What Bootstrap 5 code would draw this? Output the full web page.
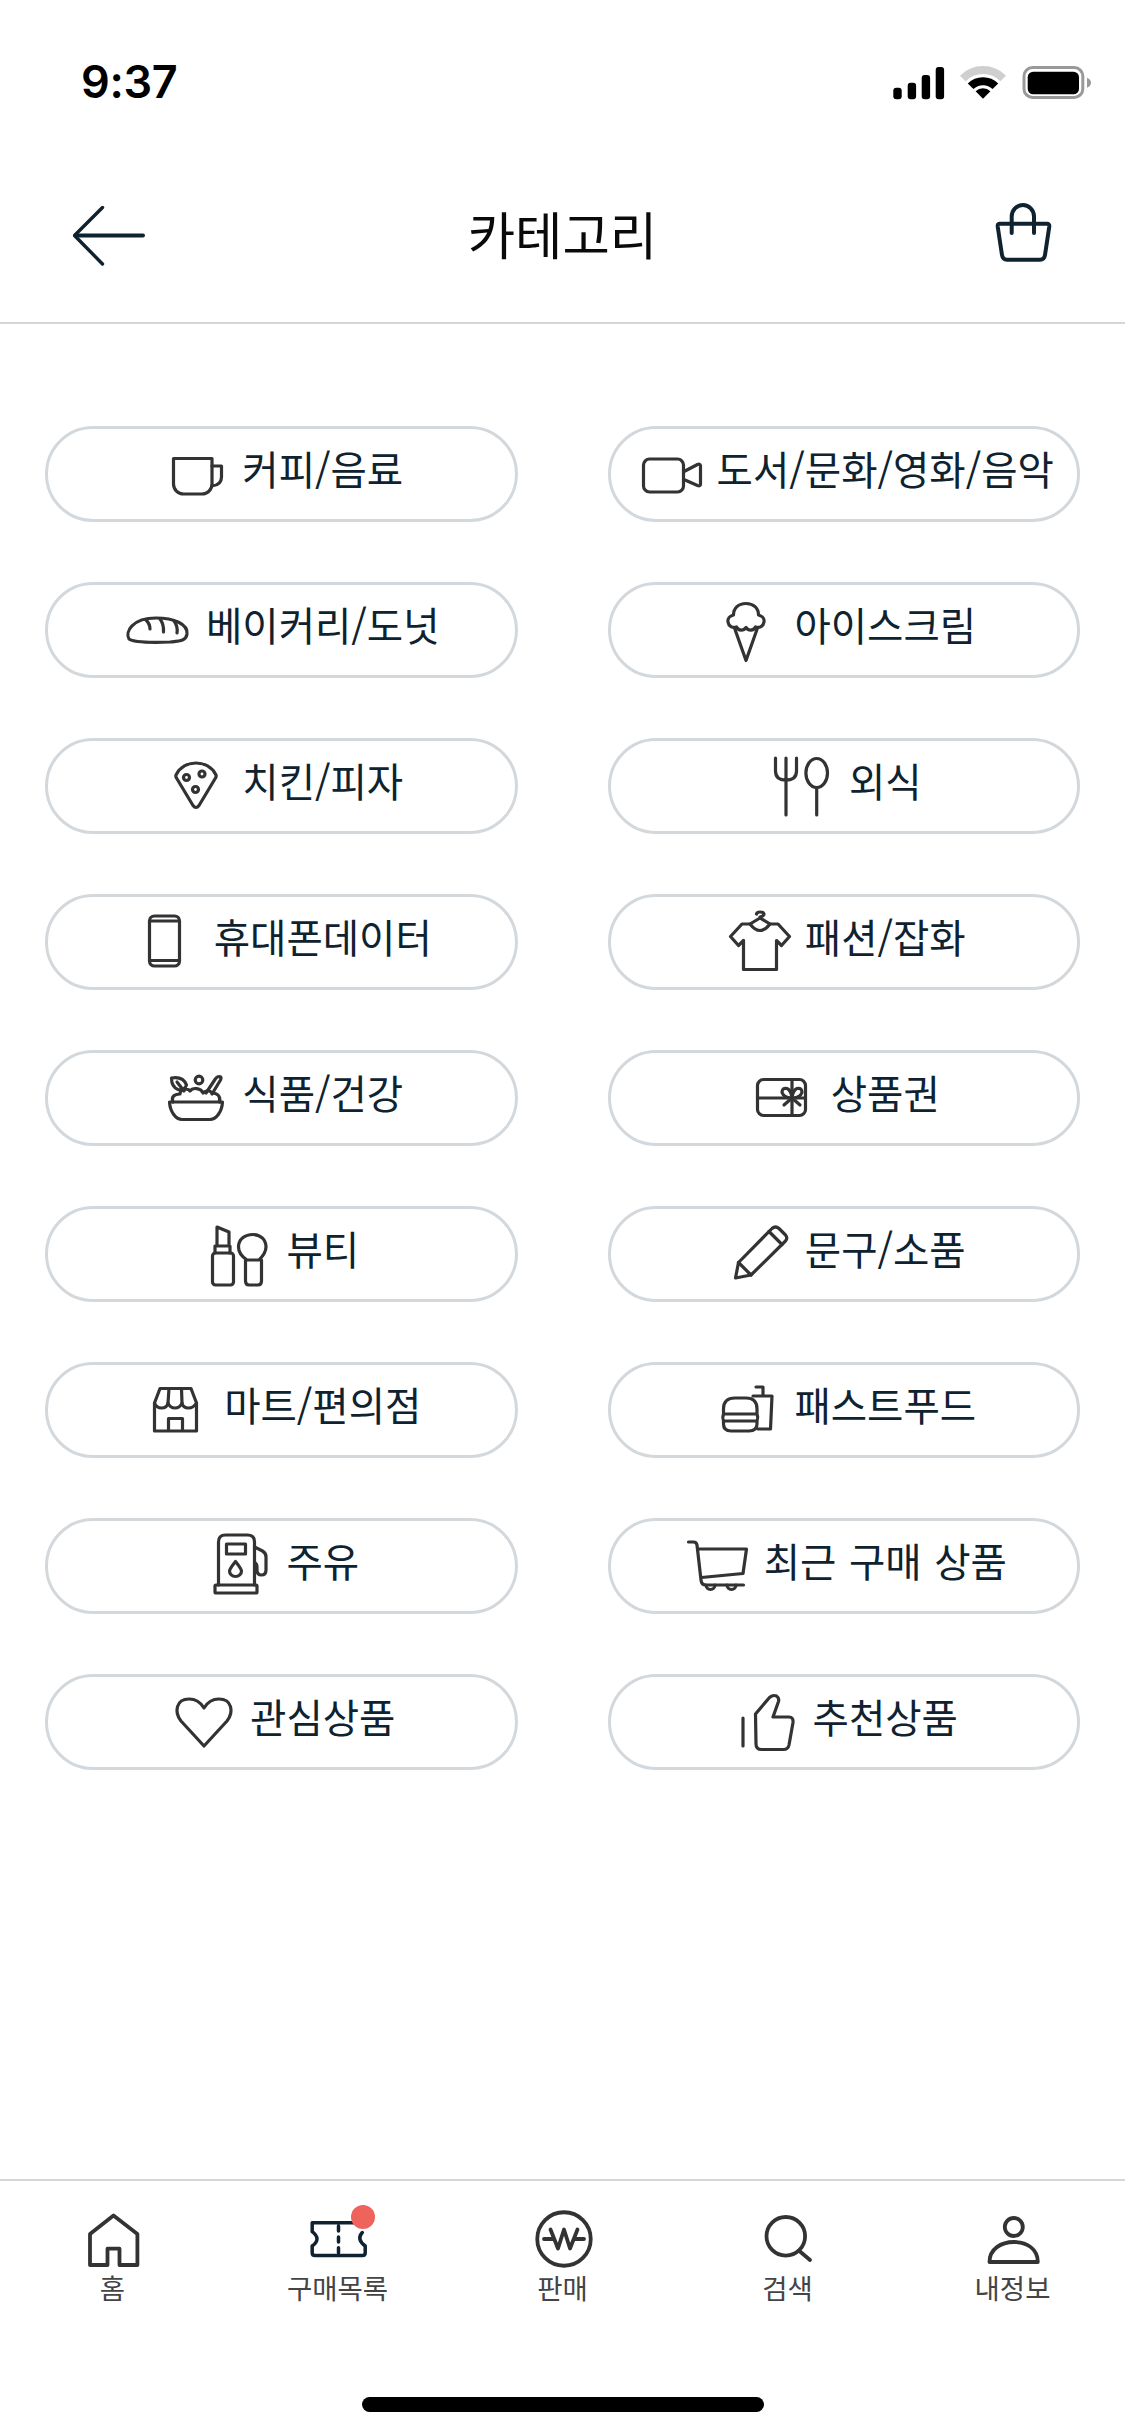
<!DOCTYPE html>
<html lang="ko">
<head>
<meta charset="utf-8">
<title>카테고리</title>
<meta name="viewport" content="width=device-width, initial-scale=1">
<link rel="stylesheet" href="https://cdn.jsdelivr.net/npm/bootstrap@5.3.0/dist/css/bootstrap.min.css">
<style>
body{font-family:"Noto Sans CJK KR","Noto Sans",sans-serif;color:#0f2230;background:#fff}
.screen{height:2436px;overflow:hidden}
.status-strip{height:148px;padding:65px 33px 0 81px}
.clock{font-family:Inter,"Liberation Sans",sans-serif;font-weight:600;font-size:45px;line-height:34px;color:#000;letter-spacing:-.3px}
.top-bar{height:176px;padding:0 73px;border-bottom:2px solid #d6d6d6}
.top-side{width:90px}
.top-side-l{padding-top:2px}
.top-side-r{padding-bottom:4px}
.top-title{font-size:51.5px;font-weight:400;color:#0a0a0a;line-height:1;margin:0 0 5px}
.cat-area{padding:102px 45px 0}
.cat-grid{--bs-gutter-x:90px;--bs-gutter-y:60px}
.cat-pill{height:96px;border:3px solid #d3d8dc;background:#fff;color:#0f2230;font-size:39.5px;line-height:1;padding:0;word-spacing:1.5px}
.cat-pill:hover{border-color:#d3d8dc;background:#fff;color:#0f2230}
.cat-ico{width:83px;height:90px;flex:none;overflow:visible;margin:0 -3px 0 3px}
.cat-label{position:relative;top:-6px;white-space:nowrap}
.ln{fill:none;stroke:#333;stroke-width:3.2;stroke-linecap:round;stroke-linejoin:round}
.tab-bar{border-top:2px solid #d6d6d6;padding-top:25px}
.tab-item{width:225px;color:#444;font-size:27.5px;line-height:1;text-decoration:none}
.tab-ico{width:70px;height:65px;display:block}
.tab-wrap{position:relative}
.tab-dot{position:absolute;left:48.5px;top:-.5px;width:24px;height:24px;border-radius:50%;background:#ee635c}
.tab-text{margin-top:3px}
.home-pill{width:402px;height:15px;border-radius:8px;background:#000;margin:96px 0 24px}
.ln-t{fill:none;stroke:#333;stroke-width:3.8;stroke-linecap:round;stroke-linejoin:round}
.ln-d{fill:none;stroke:#0f2230;stroke-width:3.5;stroke-linecap:round;stroke-linejoin:round}
</style>
</head>
<body>
<div class="screen d-flex flex-column">

  <div class="status-strip d-flex justify-content-between align-items-start">
    <div class="clock">9:37</div>
    <svg width="199" height="36" viewBox="893 64 199 36" aria-hidden="true">
      <rect x="893.3" y="86.7" width="8.4" height="11.6" rx="3"/>
      <rect x="907.7" y="81.7" width="8.4" height="16.6" rx="3"/>
      <rect x="921.7" y="74" width="8.4" height="24.3" rx="3"/>
      <rect x="935.7" y="66" width="8.4" height="32.3" rx="3"/>
      <g transform="translate(983 97.7)">
        <path d="M-20.2 -20.2A28.5 28.5 0 0 1 20.2 -20.2" fill="none" stroke="#cfcfcf" stroke-width="8"/>
        <path d="M-12.4 -12.4A17.5 17.5 0 0 1 12.4 -12.4" fill="none" stroke="#000" stroke-width="8"/>
        <path d="M0 0L-7.4 -7.4A10.5 10.5 0 0 1 7.4 -7.4Z" fill="#000"/>
      </g>
      <rect x="1024" y="66.6" width="58.8" height="29.8" rx="8.5" fill="none" stroke="#999" stroke-width="3"/>
      <rect x="1027.7" y="70.7" width="51.3" height="22.6" rx="5.5" fill="#000"/>
      <path d="M1087 76.7V86.7Q1091 85 1091 81.7Q1091 78.4 1087 76.7Z" fill="#999"/>
    </svg>
  </div>

  <header class="top-bar d-flex align-items-center justify-content-between">
    <div class="top-side top-side-l d-flex">
      <svg width="72" height="60" viewBox="0 0 72 60" aria-hidden="true" fill="none" stroke="#0f2230" stroke-linecap="round" stroke-linejoin="round">
        <path d="M29.5 1.5L1.5 29.5L29.5 58" stroke-width="3.4"/>
        <path d="M3 29.5H70" stroke-width="4"/>
      </svg>
    </div>
    <h1 class="top-title flex-grow-1 text-center">카테고리</h1>
    <div class="top-side top-side-r d-flex justify-content-end">
      <svg width="57" height="60" viewBox="0 0 57 60" aria-hidden="true" fill="none" stroke="#0f2230" stroke-width="4" stroke-linecap="round" stroke-linejoin="round">
        <path d="M4.5 20.7H52Q54.5 20.7 54.3 23.5L50 52Q49.3 56.7 45 56.7H12Q7.8 56.7 7 52L2.7 23.5Q2.5 20.7 4.5 20.7Z"/>
        <path d="M16.7 30V13.5A11.15 11.5 0 0 1 39 13.5V30"/>
      </svg>
    </div>
  </header>

  <main class="cat-area">
    <div class="row row-cols-2 cat-grid">
      <div class="col"><a href="#" class="btn cat-pill rounded-pill w-100 d-flex align-items-center justify-content-center">
        <svg class="cat-ico" viewBox="-10 3 83 90" aria-hidden="true"><path class="ln" d="M1.5 32.5H40V58a10 10 0 0 1-10 10H11.5a10 10 0 0 1-10-10Z"/><path class="ln" d="M40 40H49.5V51Q49.5 59 40 60"/></svg>
        <span class="cat-label">커피/음료</span></a></div>
      <div class="col"><a href="#" class="btn cat-pill rounded-pill w-100 d-flex align-items-center justify-content-center">
        <svg class="cat-ico" viewBox="-5 3 83 90" aria-hidden="true"><rect class="ln" x="1.5" y="33" width="40" height="33" rx="6"/><path class="ln" d="M43 45L55.5 38.5Q58.5 37.5 58.5 40V58Q58.5 60.5 55.5 59.5L43 54"/></svg>
        <span class="cat-label">도서/문화/영화/음악</span></a></div>

      <div class="col"><a href="#" class="btn cat-pill rounded-pill w-100 d-flex align-items-center justify-content-center">
        <svg class="cat-ico" viewBox="0 3 83 90" aria-hidden="true"><path class="ln" d="M3 57C-1 50 6 36 30 36C48 36 62 42 61 52C60 59 54 59 44 60C30 60.5 8 61 3 57Z"/><path class="ln" d="M20 38Q24 42 24 47M34 37Q38 42 37.5 50M48 39Q52 44 51 51"/></svg>
        <span class="cat-label">베이커리/도넛</span></a></div>
      <div class="col"><a href="#" class="btn cat-pill rounded-pill w-100 d-flex align-items-center justify-content-center">
        <svg class="cat-ico" viewBox="-12.5 3 83 90" aria-hidden="true"><path class="ln" d="M7 33C7 26 12 21.5 19.5 21.5C27 21.5 32 26 32 33C36 34 38 37 37.5 40C37 44 33 46.5 29 45C27 49 22 49 19.5 45.5C17 49 12 49 10 45C6 46.5 2 44 1.5 40C1 37 3 34 7 33Z"/><path class="ln" d="M8 46L19.5 78.5L31 46"/></svg>
        <span class="cat-label">아이스크림</span></a></div>

      <div class="col"><a href="#" class="btn cat-pill rounded-pill w-100 d-flex align-items-center justify-content-center">
        <svg class="cat-ico" viewBox="-12 3 83 90" aria-hidden="true"><path class="ln" d="M2 37C6 29 14 25 22 25C30 25 38 29 42 37Q42.5 38.5 41.5 40L25 67.5Q22 71.5 19 67.5L2.5 40Q1.5 38.5 2 37Z"/><circle class="ln" cx="12.5" cy="39.5" r="3" stroke-width="2.5"/><circle class="ln" cx="28" cy="36" r="3" stroke-width="2.5"/><circle class="ln" cx="21.5" cy="51.5" r="3" stroke-width="2.5"/></svg>
        <span class="cat-label">치킨/피자</span></a></div>
      <div class="col"><a href="#" class="btn cat-pill rounded-pill w-100 d-flex align-items-center justify-content-center">
        <svg class="cat-ico" viewBox="-5 3 83 90" aria-hidden="true"><path class="ln" d="M1.5 20V33Q1.5 42 12 42Q22.5 42 22.5 33V20M12 20V77"/><ellipse class="ln" cx="42.7" cy="35" rx="10.8" ry="14.5"/><path class="ln" d="M42.7 50V77"/></svg>
        <span class="cat-label">외식</span></a></div>

      <div class="col"><a href="#" class="btn cat-pill rounded-pill w-100 d-flex align-items-center justify-content-center">
        <svg class="cat-ico" viewBox="-14 3 83 90" aria-hidden="true"><rect class="ln" x="1.5" y="22" width="30" height="50" rx="5"/><path class="ln" d="M1.5 27H31.5M1.5 66.5H31.5"/></svg>
        <span class="cat-label">휴대폰데이터</span></a></div>
      <div class="col"><a href="#" class="btn cat-pill rounded-pill w-100 d-flex align-items-center justify-content-center">
        <svg class="cat-ico" viewBox="-4 3 83 90" aria-hidden="true"><path class="ln" d="M21 30H13L1.5 42.5L9.5 51.5L14.5 46.5V75.5H47.5V46.5L52.5 51.5L60.5 42.5L49 30H41Q36 36.5 31 36.5Q26 36.5 21 30Z"/><path class="ln" d="M21 30L31 24L41 30M31 24V23Q35 22 35 20Q34.5 18 31 18Q28 18 27.5 20"/></svg>
        <span class="cat-label">패션/잡화</span></a></div>

      <div class="col"><a href="#" class="btn cat-pill rounded-pill w-100 d-flex align-items-center justify-content-center">
        <svg class="cat-ico" viewBox="-6 3 83 90" aria-hidden="true"><path class="ln" d="M1.5 52H54.5C54 62 48 69.5 42 69.5H14C8 69.5 2 62 1.5 52Z"/><path class="ln" d="M5 52C3 47 6 44 12 44C12 39 20 38 22 41C25 37 33 38 35 43C38 40 42 40 44 43C49 43 53 46 51.5 52"/><path class="ln" d="M3.5 28Q15 26 18.5 35Q16 41 10 39.5Q3.5 37 3.5 28ZM9 32L16 41"/><circle class="ln" cx="31" cy="30" r="3.8"/><path class="ln" d="M44 44L52.5 30Q54 26.5 51.5 26.5Q48.5 26.5 47 29.5L38 43"/></svg>
        <span class="cat-label">식품/건강</span></a></div>
      <div class="col"><a href="#" class="btn cat-pill rounded-pill w-100 d-flex align-items-center justify-content-center">
        <svg class="cat-ico" viewBox="-5 3 83 90" aria-hidden="true"><rect class="ln" x="1.5" y="29.5" width="48" height="36" rx="6"/><path class="ln" d="M1.5 48H49.5M36 29.5V65.5"/><path class="ln" d="M36 48Q28 48 26 42.5Q26 37.5 31 38.5Q35 40 36 48Q37 40 41 38.5Q46 37.5 46 42.5Q44 48 36 48M36 48L28 55M36 48L44 55"/></svg>
        <span class="cat-label">상품권</span></a></div>

      <div class="col"><a href="#" class="btn cat-pill rounded-pill w-100 d-flex align-items-center justify-content-center">
        <svg class="cat-ico" viewBox="-5 3 83 90" aria-hidden="true"><rect class="ln" x="1.5" y="47" width="21" height="32" rx="3"/><path class="ln" d="M4 47V40H19V47M6 40V21L18 26V40"/><path class="ln" d="M36 54C30 50 27.5 46 27.5 41C27.5 33 34 28.5 42 28.5C50 28.5 55 34 55 41C55 46 52 50 48 54Z"/><path class="ln" d="M34.5 54V75Q34.5 79 38 79H47Q50.5 79 50.5 75V54"/></svg>
        <span class="cat-label">뷰티</span></a></div>
      <div class="col"><a href="#" class="btn cat-pill rounded-pill w-100 d-flex align-items-center justify-content-center">
        <svg class="cat-ico" viewBox="-9 3 83 90" aria-hidden="true"><path class="ln" d="M1.5 72L4.5 56.5L38 22.5Q41.5 19.5 45 22.5L51.5 29Q54 32 51.5 35L17 69Z"/><path class="ln" d="M4.5 56.5L17 69M35 25.5L48 38.5"/></svg>
        <span class="cat-label">문구/소품</span></a></div>

      <div class="col"><a href="#" class="btn cat-pill rounded-pill w-100 d-flex align-items-center justify-content-center">
        <svg class="cat-ico" viewBox="-9 3 83 90" aria-hidden="true"><path class="ln" d="M7 26.5H38L43.5 41Q40.5 46 35.5 46Q30 46 29 41Q27 46 22 46Q17 46 15 41Q14 46 8.5 46Q3.5 46 1.5 41Z"/><path class="ln" d="M15 41L16 26.5M29 41L28.5 26.5M1.5 41V69H43.5V41M15.5 69V56.5H29.5V69"/></svg>
        <span class="cat-label">마트/편의점</span></a></div>
      <div class="col"><a href="#" class="btn cat-pill rounded-pill w-100 d-flex align-items-center justify-content-center">
        <svg class="cat-ico" viewBox="-8 3 83 90" aria-hidden="true"><path class="ln" d="M1.5 52V47Q1.5 36 13 36H24Q35 36 35 47V52M1.5 52H35M1.5 59H35M1.5 52Q0 55.5 1.5 59M35 52Q36.5 55.5 35 59M1.5 59V62Q1.5 69 9 69H27Q35 69 35 62V59"/><path class="ln" d="M31 34H50L48.5 67H36M41 34V25H34"/></svg>
        <span class="cat-label">패스트푸드</span></a></div>

      <div class="col"><a href="#" class="btn cat-pill rounded-pill w-100 d-flex align-items-center justify-content-center">
        <svg class="cat-ico" viewBox="-7.5 3 83 90" aria-hidden="true"><path class="ln" d="M5 67V24Q5 17 12 17H34Q41 17 41 24V67"/><rect class="ln" x="1.5" y="67" width="42" height="8" rx="1"/><rect class="ln" x="13" y="26" width="19" height="10"/><path class="ln" d="M22 43.5Q16 51 16 53A6 5.5 0 0 0 28 53Q28 51 22 43.5Z"/><path class="ln" d="M41 29L49 33Q52.5 35 52.5 39V52Q52.5 57 48 57Q43.5 57 43.5 52V49Q43.5 45 41 45"/></svg>
        <span class="cat-label">주유</span></a></div>
      <div class="col"><a href="#" class="btn cat-pill rounded-pill w-100 d-flex align-items-center justify-content-center">
        <svg class="cat-ico" viewBox="-3.5 3 83 90" aria-hidden="true"><path class="ln" d="M1 24H6Q9 24 9.5 27L13.5 62Q14 67 18 67H56M11 31H59L55.5 55.5L14 59.5"/><path class="ln" d="M18.5 67a4.5 4.5 0 0 0 9 0M39.5 67a4.5 4.5 0 0 0 9 0"/></svg>
        <span class="cat-label">최근 구매 상품</span></a></div>

      <div class="col"><a href="#" class="btn cat-pill rounded-pill w-100 d-flex align-items-center justify-content-center">
        <svg class="cat-ico" viewBox="-5 3 83 90" aria-hidden="true"><path class="ln" d="M29 72L6 47C-1 38 1 25 14 25C21 25 26 29 29 34C32 29 37 25 44 25C57 25 59 38 52 47Z"/></svg>
        <span class="cat-label">관심상품</span></a></div>
      <div class="col"><a href="#" class="btn cat-pill rounded-pill w-100 d-flex align-items-center justify-content-center">
        <svg class="cat-ico" viewBox="-8.5 3 83 90" aria-hidden="true"><path class="ln" d="M1.5 44V72"/><path class="ln" d="M14 40L28 23.5Q31.5 20.5 35 22Q38 24 37 27.5L31.5 43H47.5Q52 43 51.5 48.5L47.5 71Q46.5 75.5 42 75.5H20Q14.5 75.5 14.5 70Z"/></svg>
        <span class="cat-label">추천상품</span></a></div>
    </div>
  </main>

  <nav class="tab-bar mt-auto">
    <div class="d-flex">
      <a href="#" class="tab-item d-flex flex-column align-items-center">
        <svg class="tab-ico" viewBox="-35 0 70 65" aria-hidden="true"><path class="ln-t" d="M0.5 9.5L24.4 28V59H6.5V42.7H-5.5V59H-23V28Z"/></svg>
        <span class="tab-text">홈</span></a>
      <a href="#" class="tab-item d-flex flex-column align-items-center">
        <span class="tab-wrap">
          <svg class="tab-ico" viewBox="-35 0 70 65" aria-hidden="true"><path class="ln-d" d="M16 16.7H-25.8V25.7Q-16.2 33 -25.8 40V47Q-25.8 49.5 -23 49.5H24.5Q27.2 49.5 27.2 47V40Q18 33 24.3 26.5M.5 20V25M.5 31V36M.5 41.7V46.7"/></svg>
          <span class="tab-dot"></span>
        </span>
        <span class="tab-text">구매목록</span></a>
      <a href="#" class="tab-item d-flex flex-column align-items-center">
        <svg class="tab-ico" viewBox="-35 0 70 65" aria-hidden="true"><circle class="ln-t" cx="1" cy="33" r="26.75"/><path class="ln-t" d="M-12.5 23.5L-5 42.5L1 23.5L7 42.5L14.5 23.5M-19 33H-9M11 33H21"/></svg>
        <span class="tab-text">판매</span></a>
      <a href="#" class="tab-item d-flex flex-column align-items-center">
        <svg class="tab-ico" viewBox="-35 0 70 65" aria-hidden="true"><circle class="ln-t" cx="-2.2" cy="30.3" r="19.3" stroke-width="4"/><path class="ln-t" d="M12 45.5L22 54" stroke-width="4"/></svg>
        <span class="tab-text">검색</span></a>
      <a href="#" class="tab-item d-flex flex-column align-items-center">
        <svg class="tab-ico" viewBox="-35 0 70 65" aria-hidden="true"><circle class="ln-t" cx=".8" cy="21" r="9"/><path class="ln-t" d="M-23.5 56C-23.5 43 -12 36 1 36C14 36 24.8 43 24.8 56Z"/></svg>
        <span class="tab-text">내정보</span></a>
    </div>
    <div class="d-flex justify-content-center">
      <div class="home-pill"></div>
    </div>
  </nav>
</div>
<script src="https://cdn.jsdelivr.net/npm/bootstrap@5.3.0/dist/js/bootstrap.bundle.min.js"></script>
</body>
</html>
